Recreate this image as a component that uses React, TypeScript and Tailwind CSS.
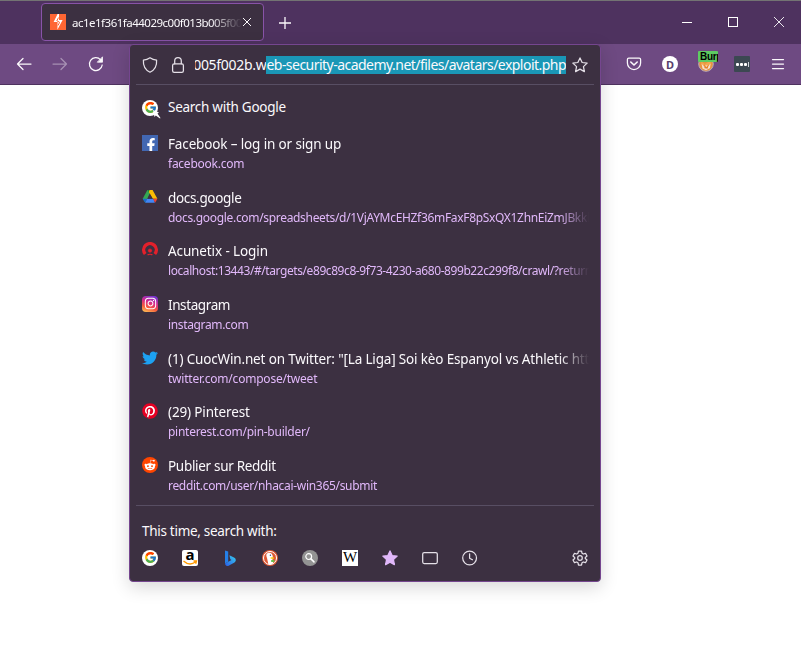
import React from "react";
import { FcGoogle } from "react-icons/fc";
import { FaTwitter, FaPinterest, FaRedditAlien, FaFacebookF, FaInstagram } from "react-icons/fa";

type IconProps = { className?: string; children?: React.ReactNode };

function Glyph({ className = "size-4", children }: IconProps) {
  return (
    <svg viewBox="0 0 16 16" className={`shrink-0 ${className}`} fill="none" stroke="currentColor" strokeWidth="1.25" strokeLinecap="round" strokeLinejoin="round">
      {children}
    </svg>
  );
}

const STAR = "M8 .9l2.15 4.6 5 .65-3.7 3.45.95 5L8 12.15 3.6 14.6l.95-5L.85 6.15l5-.65z";

const BurpIcon = () => (
  <svg viewBox="0 0 16 16" className="size-4 shrink-0">
    <path fill="#ff6633" d="M0 0h16v16H0z" />
    <path fill="#fff" d="M9 0H7.6L3.6 8h4l-.2 7.800L12.600 6H9z" />
    <path stroke="#ff6633" strokeWidth="1" fill="none" d="M8.600 3.500 6.800 6.700 9.600 8.300 8 11.500" />
  </svg>
);

const GoogleIcon = () => (
  <span className="flex size-4 shrink-0 items-center justify-center rounded-full bg-white">
    <FcGoogle className="size-[13px]" />
  </span>
);

const FacebookIcon = () => (
  <span className="flex size-4 shrink-0 items-end justify-end overflow-hidden bg-[#4267b2] pr-0.5">
    <FaFacebookF className="-mb-px size-[14px] translate-x-[2px] text-white" />
  </span>
);

const DriveIcon = () => (
  <svg viewBox="0 0 16 16" className="size-4 shrink-0">
    <path fill="#34a853" d="M5.4 1h4L3.3 13.8.7 9.7z" />
    <path fill="#188038" d="M5.4 1H10L8 5z" />
    <path fill="#fbbc04" d="M7.6 1h3L15.4 9.7h-4.5L6.8 3z" />
    <path fill="#4285f4" d="M5 9.7h6.3l1.6 4.1H3.2z" />
    <path fill="#1967d2" d="M.7 9.7H5l-1.8 4.1z" />
    <path fill="#ea4335" d="M11 9.7h4.4l-2.3 4.1z" />
    <path fill="#3c3041" d="m8 5.300 2.500 4.400h-5z" />
  </svg>
);

const AcunetixIcon = () => (
  <svg viewBox="0 0 16 16" className="size-4 shrink-0" fill="none" stroke="#e3202b">
    <path strokeWidth="3.4" d="M3.200 12A6.300 6.300 0 1 1 12.800 12" />
    <circle cx="8" cy="8.600" r="1.700" fill="#e3202b" strokeWidth=".6" />
    <path strokeWidth="1.200" d="M5.600 13c1-1 3.800-1 4.800 0" />
  </svg>
);

const InstagramIcon = () => (
  <span className="flex size-4 shrink-0 items-center justify-center rounded-[4px] bg-[linear-gradient(200deg,#6a35d8_5%,#d62b8b_42%,#f7583c_68%,#ffd15a_100%)]">
    <FaInstagram className="size-[13px] text-white" />
  </span>
);

const PinterestIcon = () => (
  <span className="flex size-4 shrink-0 rounded-full bg-[radial-gradient(white_60%,transparent_62%)]">
    <FaPinterest className="size-4 text-[#e60023]" />
  </span>
);

const RedditIcon = () => (
  <span className="flex size-4 shrink-0 items-center justify-center rounded-full bg-[#ff4500]">
    <FaRedditAlien className="size-[12px] text-white" />
  </span>
);

const AmazonIcon = () => (
  <span className="flex size-4 shrink-0 flex-col items-center rounded-[2px] bg-white">
    <span className="h-[10px] font-['Open_Sans',sans-serif] text-[15px] leading-[9px] font-bold text-black">a</span>
    <svg viewBox="0 0 16 6" className="h-[6px] w-4" fill="none" stroke="#ff9900" strokeWidth="1.4">
      <path d="M1.500 1c4 3.600 8.500 3.600 12 1M11.500 1h3l-.8 2.800" />
    </svg>
  </span>
);

const BingIcon = () => (
  <svg viewBox="0 0 16 16" className="size-4 shrink-0">
    <defs>
      <linearGradient id="bing" x1="0" y1="1" x2="1" y2="0">
        <stop offset="0" stopColor="#2a5be8" />
        <stop offset="1" stopColor="#38d0ee" />
      </linearGradient>
    </defs>
    <path fill="#2580e8" d="M3 .4 6.2 1.6v10.1L3 13.6z" />
    <path fill="url(#bing)" d="M7.4 5.3 12 7.6c2.3 1.2 2.4 3.6.5 4.900L6.2 16C4.6 16 3 15 3 13.400l6.500-3.500-1.200-.7z" />
  </svg>
);

const DuckIcon = () => (
  <svg viewBox="0 0 16 16" className="size-4 shrink-0">
    <circle cx="8" cy="8" r="8" fill="#de5833" />
    <circle cx="8" cy="8" r="6.5" fill="none" stroke="#fff" strokeWidth="1" />
    <path fill="#fff" d="M4.600 4c1.800-2.200 5.800-1.200 6.200 2.200l-.4 2.800.8 4.500c-1.500.9-3.500 1-4.900.4L5 8C4.300 6.300 4.100 5 4.600 4z" />
    <path fill="#fdd20a" d="M8.600 7.200 12.200 7.400l-.4 1.400H8.600z" />
    <circle cx="8.400" cy="5.300" r=".7" fill="#2d4f8e" />
    <path fill="#65bc46" d="M9 10.300 12.300 9.800v2.500L9 11.700z" />
  </svg>
);

const GrayLensIcon = () => (
  <svg viewBox="0 0 16 16" className="size-4 shrink-0">
    <circle cx="8" cy="8" r="8" fill="#939393" />
    <g fill="none" stroke="#fff" strokeLinecap="round">
      <circle cx="6.7" cy="6.6" r="2.9" strokeWidth="1.2" />
      <path strokeWidth="1.5" d="m9 8.9 3 3" />
    </g>
  </svg>
);

const WikipediaIcon = () => (
  <span className="flex size-4 shrink-0 items-center justify-center bg-white font-['Liberation_Serif',serif] text-[15px] leading-none text-black">W</span>
);

const ShieldIcon = () => (
  <Glyph>
    <path d="M8 .8C6 2.2 3.8 2.9 1.4 3.1c-.4 5.6 1.5 9.7 6.6 12.1 5.1-2.4 7-6.5 6.6-12.1C12.2 2.9 10 2.2 8 .8z" />
  </Glyph>
);

const LockIcon = () => (
  <Glyph>
    <rect x="2.6" y="6.8" width="10.8" height="8.5" rx="1.6" />
    <path d="M4.7 6.8V4a3.3 3.3 0 0 1 6.6 0v2.8" />
  </Glyph>
);

type Suggestion = { icon: React.ReactNode; title: string; url: string; titleClass: string; urlClass: string };

const suggestions: Suggestion[] = [
  { icon: <FacebookIcon />, title: "Facebook – log in or sign up", url: "facebook.com", titleClass: "tracking-[-0.14px]", urlClass: "tracking-[-0.25px]" },
  { icon: <DriveIcon />, title: "docs.google", url: "docs.google.com/spreadsheets/d/1VjAYMcEHZf36mFaxF8pSxQX1ZhnEiZmJBkkk", titleClass: "tracking-[-0.33px]", urlClass: "tracking-[-0.32px]" },
  { icon: <AcunetixIcon />, title: "Acunetix - Login", url: "localhost:13443/#/targets/e89c89c8-9f73-4230-a680-899b22c299f8/crawl/?return", titleClass: "tracking-[-0.11px]", urlClass: "tracking-[-0.42px]" },
  { icon: <InstagramIcon />, title: "Instagram", url: "instagram.com", titleClass: "tracking-[-0.4px]", urlClass: "tracking-[-0.35px]" },
  { icon: <FaTwitter className="size-4 shrink-0 text-[#1da1f2]" />, title: "(1) CuocWin.net on Twitter: \"[La Liga] Soi kèo Espanyol vs Athletic http", url: "twitter.com/compose/tweet", titleClass: "tracking-[-0.16px]", urlClass: "tracking-[-0.22px]" },
  { icon: <PinterestIcon />, title: "(29) Pinterest", url: "pinterest.com/pin-builder/", titleClass: "tracking-[-0.15px]", urlClass: "tracking-[-0.27px]" },
  { icon: <RedditIcon />, title: "Publier sur Reddit", url: "reddit.com/user/nhacai-win365/submit", titleClass: "tracking-[-0.31px]", urlClass: "tracking-[-0.31px]" },
];

const FADE = "[mask-image:linear-gradient(to_right,black_calc(100%_-_30px),transparent)]";

function SuggestionRow({ icon, title, url, titleClass, urlClass }: Suggestion) {
  return (
    <li className="flex h-[53.67px] gap-[10px] pr-[11px] pl-3">
      <div className="pt-[3px]">{icon}</div>
      <div className={`min-w-0 flex-1 overflow-hidden whitespace-nowrap ${FADE}`}>
        <div className={`h-[22px] text-[13.5px] leading-[24px] ${titleClass}`}>{title}</div>
        <div className={`h-[20px] text-[12px] leading-[20px] text-[#e1b8fa] ${urlClass}`}>{url}</div>
      </div>
    </li>
  );
}

function TitleBar() {
  return (
    <header className="flex h-11 border-t border-[#737373] bg-[#4e325f] pl-[41px]">
      <div className="mt-[2px] flex h-[38px] w-[223px] items-center rounded-[4px] border border-[#8853a8] bg-[#3c3041] pl-2">
        <BurpIcon />
        <div className="mt-px ml-[6px] w-[170px] overflow-hidden text-[11.5px] tracking-[-0.5px] whitespace-nowrap [mask-image:linear-gradient(to_right,black_calc(100%_-_32px),transparent)]">
          ac1e1f361fa44029c00f013b005f002b
        </div>
        <svg viewBox="0 0 10 10" className="size-[10px] shrink-0" stroke="currentColor" strokeWidth="1">
          <path d="m1 1 8 8M9 1 1 9" />
        </svg>
      </div>
      <svg viewBox="0 0 14 14" className="mt-[15px] ml-[14px] size-[14px]" stroke="currentColor" strokeWidth="1.3">
        <path d="M7 1v12M1 7h12" />
      </svg>
      <div className="mt-[16px] mr-[17px] ml-auto flex h-[10px] items-center gap-[36px]">
        <span className="h-px w-[10px] bg-white" />
        <span className="size-[10px] border border-white" />
        <svg viewBox="0 0 10 10" className="size-[10px]" stroke="currentColor" strokeWidth="0.9">
          <path d="m0 0 10 10M10 0 0 10" />
        </svg>
      </div>
    </header>
  );
}

function Toolbar() {
  return (
    <nav className="flex h-[41px] items-center border-b border-[#4e325f] bg-[#6e4a82] pr-[15px] pl-4">
      <Glyph>
        <path d="M15 8H1.5M7 2.5 1.5 8 7 13.5" />
      </Glyph>
      <Glyph className="ml-5 size-4 opacity-40">
        <path d="M1 8h13.500M9 2.500 14.500 8 9 13.500" />
      </Glyph>
      <Glyph className="ml-5 size-4">
        <path d="M14.200 9A6.400 6.400 0 1 1 12.600 3.800" />
        <path fill="currentColor" strokeWidth=".8" d="M14.500 1.200v5H9.600z" />
      </Glyph>
      <div className="ml-auto flex items-center gap-5">
        <Glyph>
          <path d="M2.800 2h10.400c.8 0 1.400.6 1.400 1.400V7A6.600 6.600 0 0 1 1.400 7V3.400C1.400 2.600 2 2 2.800 2z" />
          <path strokeWidth="1.6" d="M4.800 6 8 9l3.200-3" />
        </Glyph>
        <span className="flex size-4 items-center justify-center rounded-full bg-white text-[11px] leading-none font-bold text-[#5b3e6c]">D</span>
        <span className="relative size-4">
          <svg viewBox="0 0 16 16" className="size-4">
            <circle cx="8" cy="8" r="7.300" fill="#e8933f" stroke="#b6aaba" strokeWidth="1" />
            <path d="M3 5.500 7 8l5-3 1 3-2 5H5z" fill="#f3a850" />
            <path d="m3.500 7.500 2.500 3 2-1.200 2.500.7 2-2.500-.5 4.500-4 2.300-3.500-1.800z" fill="#f6ded0" />
            <path d="m6 8 2.200 3L11 8.500l-1.500 4.300-3-.6z" fill="#e88328" />
          </svg>
          <span className="absolute -top-[5px] left-0 h-[11px] w-5 overflow-hidden rounded-[1px] bg-[#5ecb62] pl-[2px] font-['Liberation_Sans',sans-serif] text-[10px] leading-[12px] font-bold tracking-[-0.3px] text-black">Burp</span>
        </span>
        <span className="flex size-4 items-center justify-center gap-px rounded-[1px] bg-[#3c4852]">
          <i className="size-[3px] rounded-[1px] bg-white" />
          <i className="size-[3px] rounded-[1px] bg-white" />
          <i className="size-[3px] rounded-[1px] bg-white" />
          <i className="h-[5px] w-px bg-gray-300" />
        </span>
        <Glyph>
          <path d="M2.500 3.500h11M2.500 8h11M2.500 12.500h11" />
        </Glyph>
      </div>
    </nav>
  );
}

function AddressPopup() {
  return (
    <section className="absolute top-11 left-[129px] h-[538px] w-[472px] rounded-[4px] border border-[#75468f] bg-[#3c3041] shadow-[0_5px_18px_rgba(0,0,0,0.16)]">
      <div className="mx-[6px] flex h-10 items-center border-b border-[#584e63] px-[6px]">
        <div className="flex gap-3 text-[#e5e0e8]">
          <ShieldIcon />
          <LockIcon />
        </div>
        <div className="ml-[9px] flex w-[371px] justify-end overflow-hidden text-[14px] leading-[18px] whitespace-nowrap">
          <span className="tracking-[-0.3px]">005f002b.w</span>
          <span className="bg-[#1a97b6] tracking-[-0.53px]">eb-security-academy.net/files/avatars/exploit.php</span>
        </div>
        <Glyph className="ml-[6px] size-4 text-[#e5e0e8]">
          <path d={STAR} />
        </Glyph>
      </div>
      <div className="mb-[2px] flex h-[45px] items-center gap-[10px] pl-3">
        <span className="relative">
          <GoogleIcon />
          <svg viewBox="0 0 10 10" className="absolute top-[9px] left-[9px] size-[10px]">
            <path fill="#fff" d="m2 1 6 2.500-1.500 1L9.500 9 9 9.500 4.800 6.500 3.500 8z" />
          </svg>
        </span>
        <span className="text-[13.5px] tracking-[-0.27px]">Search with Google</span>
      </div>
      <ul>
        {suggestions.map((s) => (
          <SuggestionRow key={s.title} {...s} />
        ))}
      </ul>
      <div className="mx-[6px] -mt-[2.690px] h-px bg-[#584e63]" />
      <div className="px-3 pt-[15px]">
        <div className="h-[20px] text-[13.5px] leading-[20px] tracking-[-0.29px]">This time, search with:</div>
        <div className="mt-[9px] flex items-center gap-6 text-[#e5e0e8]">
          <GoogleIcon />
          <AmazonIcon />
          <BingIcon />
          <DuckIcon />
          <GrayLensIcon />
          <WikipediaIcon />
          <Glyph className="size-4 text-[#e1b8fa]">
            <path fill="currentColor" d={STAR} />
          </Glyph>
          <Glyph>
            <rect x=".7" y="2.600" width="14.600" height="11" rx="1.500" />
          </Glyph>
          <Glyph>
            <circle cx="7.600" cy="8" r="6.900" />
            <path d="M7.600 3.800v4.400l2.800 1.600" />
          </Glyph>
          <Glyph className="ml-auto size-4">
            <circle cx="8" cy="8" r="2.300" />
            <path d="M6.500 1h3l.5 2.200 1.300.8 2.200-.7L15 6l-1.700 1.400v1.200L15 10l-1.500 2.700-2.200-.7-1.300.8-.5 2.200h-3L6 12.800 4.700 12l-2.200.7L1 10l1.700-1.400V7.400L1 6l1.500-2.700 2.200.7L6 3.200z" />
          </Glyph>
        </div>
      </div>
    </section>
  );
}

export default function App() {
  return (
    <main className="relative h-[667px] w-[801px] overflow-hidden bg-white font-['Noto_Sans','Open_Sans',sans-serif] text-[#fbf9fc]">
      <TitleBar />
      <Toolbar />
      <AddressPopup />
    </main>
  );
}
